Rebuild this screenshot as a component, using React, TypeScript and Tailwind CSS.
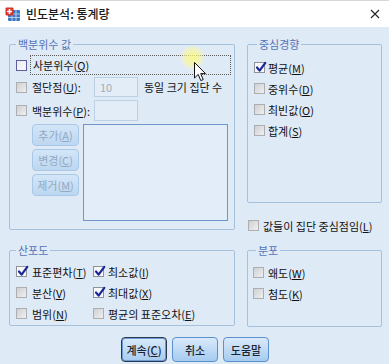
import type { ReactNode } from "react";

const FONT = "font-['Noto_Sans_CJK_KR','Noto_Sans',sans-serif]";

function Check({ checked, hover }: { checked?: boolean; hover?: boolean }) {
  if (checked) {
    return (
      <span className="relative flex h-[11px] w-[11px] shrink-0 items-center justify-center border border-[#8f9296] bg-[#f7f8fa]">
        <svg width="12" height="12" viewBox="0 0 12 12" className="absolute left-[0px] top-[-2px]">
          <path d="M2 6.5 L4.6 9.6 L10.3 1.8" fill="none" stroke="#1b2696" strokeWidth="2.2" strokeLinecap="round" strokeLinejoin="round" />
        </svg>
      </span>
    );
  }
  if (hover) {
    return <span className="h-[11px] w-[11px] shrink-0 border border-[#5d5f9e] bg-linear-to-br from-[#e9ecf4] to-[#fbfbfd]" />;
  }
  return <span className="h-[11px] w-[11px] shrink-0 border border-[#acaeb2] bg-linear-to-br from-[#cfd0d3] to-[#efeff0]" />;
}

function Key({ k }: { k: string }) {
  return (
    <>
      (<u>{k}</u>)
    </>
  );
}

function Group({ title, legendClass, className, children }: { title: string; legendClass?: string; className?: string; children: ReactNode }) {
  return (
    <fieldset className={`rounded-[2px] border border-[#a6c1dc] ${className ?? ""}`}>
      <legend className={`px-[2px] text-[11px] leading-[12px] text-[#5674b6] ${legendClass ?? ""}`}>{title}</legend>
      {children}
    </fieldset>
  );
}

function Row({ checked, children, gap = "ml-[5px]" }: { checked?: boolean; children: ReactNode; gap?: string }) {
  return (
    <div className="flex h-[21px] items-center">
      <Check checked={checked} />
      <span className={`${gap} whitespace-nowrap`}>{children}</span>
    </div>
  );
}

function SideButton({ children }: { children: ReactNode }) {
  return (
    <div className="flex h-[22px] w-[47px] items-center justify-center rounded-[4px] border border-[#a9c7e6] bg-linear-to-b from-[#d3e6f8] to-[#bcd7f1] text-[11px] text-[#93a9c2]">
      {children}
    </div>
  );
}

function DialogButton({ children, primary }: { children: ReactNode; primary?: boolean }) {
  return (
    <div
      className={`flex h-[25px] w-[46px] items-center justify-center rounded-[4px] border bg-linear-to-b from-[#d9eafb] to-[#a6cbef] text-[11px] font-medium text-[#1c2330] ${
        primary ? "border-[#27384f] shadow-[inset_0_0_0_1px_#6d9bd2]" : "border-[#5b90cf]"
      }`}
    >
      {children}
    </div>
  );
}

export default function App() {
  return (
    <div className={`relative h-[364px] w-[389px] overflow-hidden bg-[#dfeaf7] text-[11px] leading-[14px] text-[#111] ${FONT}`}>
      {/* title bar */}
      <div className="flex h-[27px] items-center border-t border-[#d8d8d8] bg-white pl-[5px] pr-[5px]">
        <svg width="16" height="15" viewBox="0 0 16 15">
          <rect x="3" y="3" width="12" height="11" rx="1" fill="#3d78c4" />
          <path d="M3 7 H15 M3 10.5 H15 M7 3 V14 M11 3 V14" stroke="#cfe0f5" strokeWidth="0.8" />
          <rect x="0.5" y="0.5" width="8" height="8" rx="1" fill="#d9342b" />
          <path d="M4.5 2 V7 M2 4.5 H7" stroke="#fff" strokeWidth="1.6" />
        </svg>
        <span className="ml-[5px] text-[12px] font-medium text-[#1a1a1a]">빈도분석: 통계량</span>
        <svg width="10" height="10" viewBox="0 0 10 10" className="ml-auto mr-[4px]">
          <path d="M1 1 L9 9 M9 1 L1 9" stroke="#222" strokeWidth="1.1" />
        </svg>
      </div>

      <div className="flex gap-[12px] pl-[9px] pt-[11px]">
        {/* left column */}
        <div className="flex w-[226px] flex-col">
          <Group title="백분위수 값" className="pb-[8px] pl-[6px] pr-[3px] pt-[5px]">
            <div className="flex h-[20px] items-center">
              <Check hover />
              <div className="ml-[3px] flex h-[20px] flex-1 items-center border border-dotted border-[#5a5a5a] pl-[2px]">
                사분위수<Key k="Q" />
              </div>
            </div>
            <div className="mt-[2px] flex h-[20px] items-center">
              <Check />
              <span className="ml-[5px] w-[62px] whitespace-nowrap">
                절단점<Key k="U" />:
              </span>
              <div className="flex h-[20px] w-[44px] items-center border border-[#bcd0e4] bg-[#e3edf8] pl-[5px] text-[#a4acb6]">10</div>
              <span className="ml-[6px] whitespace-nowrap">동일 크기 집단 수</span>
            </div>
            <div className="mt-[3px] flex h-[21px] items-center">
              <Check />
              <span className="ml-[5px] w-[62px] whitespace-nowrap">
                백분위수<Key k="P" />:
              </span>
              <div className="h-[21px] w-[44px] border border-[#bcd0e4] bg-[#e3edf8]" />
            </div>
            <div className="mt-[3px] flex">
              <div className="ml-[16px] flex flex-col gap-[3px]">
                <SideButton>
                  추가<Key k="A" />
                </SideButton>
                <SideButton>
                  변경<Key k="C" />
                </SideButton>
                <SideButton>
                  제거<Key k="M" />
                </SideButton>
              </div>
              <div className="ml-[4px] h-[97px] w-[145px] border border-[#6f96c7] bg-[#e2edf9]" />
            </div>
          </Group>

          <Group title="산포도" className="mt-[14px] pb-[1px] pl-[6px] pt-[5px]">
            <div className="grid grid-cols-[77px_1fr]">
              <Row checked>
                표준편차<Key k="T" />
              </Row>
              <Row checked gap="ml-[4px]">
                최소값<Key k="I" />
              </Row>
              <Row>
                분산<Key k="V" />
              </Row>
              <Row checked gap="ml-[4px]">
                최대값<Key k="X" />
              </Row>
              <Row>
                범위<Key k="N" />
              </Row>
              <Row gap="ml-[4px]">
                평균의 표준오차<Key k="E" />
              </Row>
            </div>
          </Group>
        </div>

        {/* right column */}
        <div className="flex w-[135px] flex-col">
          <Group title="중심경향" legendClass="ml-[3px]" className="pb-[61px] pl-[6px] pt-[7px]">
            <Row checked gap="ml-[3px]">
              평균<Key k="M" />
            </Row>
            <Row gap="ml-[3px]">
              중위수<Key k="D" />
            </Row>
            <Row gap="ml-[3px]">
              최빈값<Key k="O" />
            </Row>
            <Row gap="ml-[3px]">
              합계<Key k="S" />
            </Row>
          </Group>

          <div className="mt-[12px] pl-[1px]">
            <Row gap="ml-[4px]">
              값들이 집단 중심점임<Key k="L" />
            </Row>
          </div>

          <Group title="분포" legendClass="ml-[3px]" className="mt-[8px] pb-[22px] pl-[5px] pt-[6px]">
            <Row gap="ml-[4px]">
              왜도<Key k="W" />
            </Row>
            <Row gap="ml-[4px]">
              첨도<Key k="K" />
            </Row>
          </Group>
        </div>
      </div>

      <div className="mt-[10px] flex justify-center gap-[5px] pl-[1px]">
        <DialogButton primary>
          계속<Key k="C" />
        </DialogButton>
        <DialogButton>취소</DialogButton>
        <DialogButton>도움말</DialogButton>
      </div>

      {/* pointer highlight */}
      <div className="pointer-events-none absolute left-[180px] top-[45px] h-[25px] w-[25px] rounded-full bg-[radial-gradient(circle,rgba(255,248,120,0.85)_0%,rgba(255,250,150,0.5)_50%,rgba(255,250,160,0)_72%)]" />
      <svg className="pointer-events-none absolute left-[194px] top-[62px]" width="13" height="21" viewBox="0 0 13 21">
        <path d="M0.5 0.5 L0.5 16 L4.2 12.4 L6.8 18.6 L9.2 17.6 L6.7 11.6 L11.5 11.6 Z" fill="#fff" stroke="#111" strokeWidth="1" strokeLinejoin="round" />
      </svg>
    </div>
  );
}
